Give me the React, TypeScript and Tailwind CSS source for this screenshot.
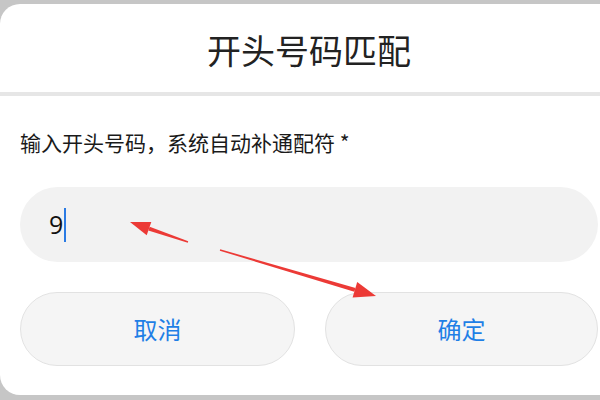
import React from "react";

export default function App() {
  const font = { fontFamily: '"Noto Sans CJK SC", "Noto Sans", sans-serif' };
  return (
    <div className="relative w-[600px] h-[400px] overflow-hidden bg-[#c6c6c6]" style={font}>
      <div className="mt-[4px] w-[618px] h-[391px] bg-white rounded-l-[20px] flex flex-col overflow-hidden">
        <div className="h-[88px] flex items-center justify-center text-[34px] text-[#222222] pt-[2px]">
          开头号码匹配
        </div>
        <div className="h-[4px] bg-[#e6e6e6]" />
        <div className="flex flex-col px-[20px]">
          <div className="mt-[31px] h-[30px] flex items-center text-[21px] text-[#1a1a1a] leading-none">
            输入开头号码，系统自动补通配符 *
          </div>
          <div className="mt-[30px] h-[75px] rounded-full bg-[#f2f2f2] flex items-center pl-[29px]">
            <span className="text-[25px] text-[#111111] leading-none" style={{ fontFamily: '"Open Sans", "Noto Sans", sans-serif' }}>9</span>
            <span className="ml-[1px] w-[2px] h-[34px] bg-[#2a7be4]" />
          </div>
          <div className="mt-[30px] flex gap-[30px]">
            <button className="w-[275px] h-[74px] rounded-full bg-[#f5f5f5] border border-[#e2e2e2] text-[24px] text-[#1f7fe6]">
              取消
            </button>
            <button className="w-[273px] h-[74px] rounded-full bg-[#f5f5f5] border border-[#e2e2e2] text-[24px] text-[#1f7fe6]">
              确定
            </button>
          </div>
        </div>
      </div>
      <svg className="absolute left-0 top-0" width="600" height="400" viewBox="0 0 600 400">
        <polygon points="188.2,241.3 187.8,242.7 148.3,230.5 149.7,226.7" fill="#ec3a36" />
        <polygon points="130,222 151.3,222 146.7,235.2" fill="#ec3a36" />
        <polygon points="219.8,250.7 220.2,249.3 355.5,287.9 354.3,291.7" fill="#ec3a36" />
        <polygon points="376,296 352.6,297.5 357.2,282.1" fill="#ec3a36" />
      </svg>
    </div>
  );
}
